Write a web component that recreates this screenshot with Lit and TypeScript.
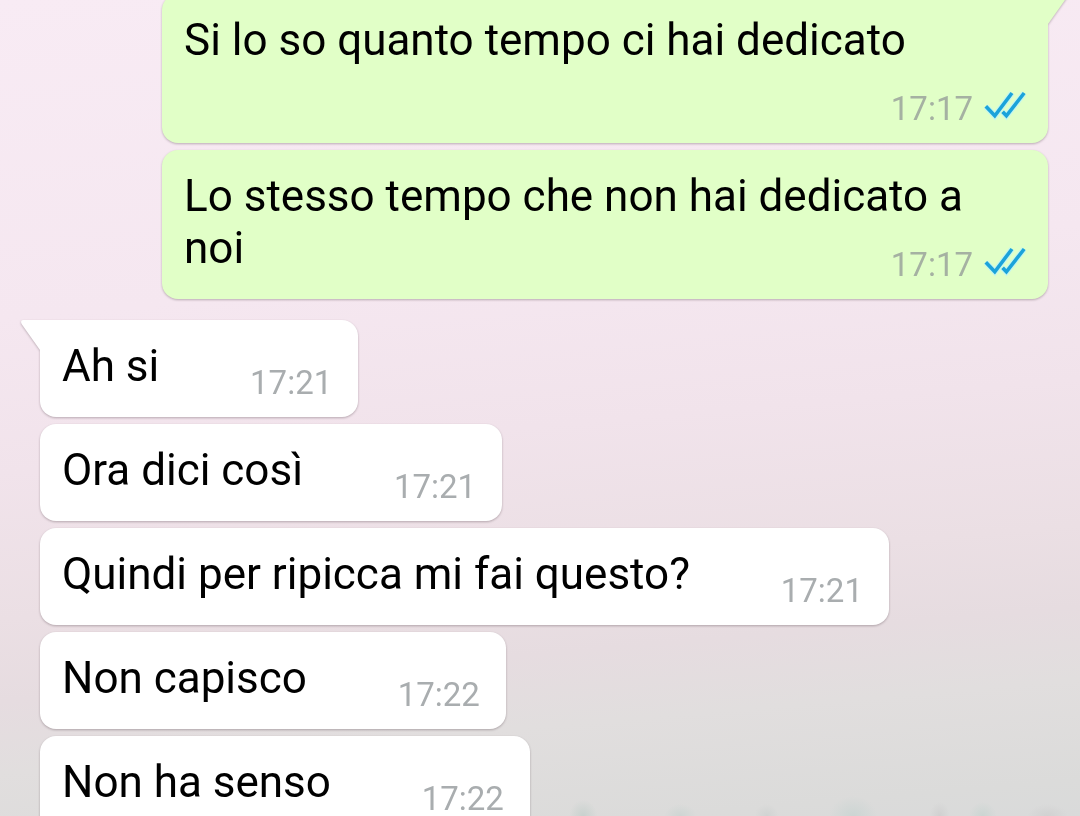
import { LitElement, html, css, svg } from "lit";
import { customElement, property } from "lit/decorators.js";

interface Message {
  text: string;
  time: string;
}

interface MessageGroup {
  mine: boolean;
  messages: Message[];
}

const GROUPS: MessageGroup[] = [
  {
    mine: true,
    messages: [
      { text: "Si lo so quanto tempo ci hai dedicato", time: "17:17" },
      { text: "Lo stesso tempo che non hai dedicato a noi", time: "17:17" },
    ],
  },
  {
    mine: false,
    messages: [
      { text: "Ah si", time: "17:21" },
      { text: "Ora dici così", time: "17:21" },
      { text: "Quindi per ripicca mi fai questo?", time: "17:21" },
      { text: "Non capisco", time: "17:22" },
      { text: "Non ha senso", time: "17:22" },
    ],
  },
];

const readTicks = html`
  <svg class="ticks" viewBox="0 0 42 36" role="img" aria-label="Letto">
    ${svg`
      <g fill="none" stroke-linecap="butt" stroke-linejoin="miter">
        <g stroke="#c4f6ee" stroke-width="6">
          <path d="M1.8 15.2 L10.8 24.8 L28 2" />
          <path d="M18.6 20.8 L22.4 24.8 L40.2 2" />
        </g>
        <g stroke="#1ba3da" stroke-width="3.6">
          <path d="M1.8 15.2 L10.8 24.8 L28 2" />
          <path d="M18.6 20.8 L22.4 24.8 L40.2 2" />
        </g>
      </g>
    `}
  </svg>
`;

@customElement("chat-bubble")
export class ChatBubble extends LitElement {
  @property() text = "";
  @property() time = "";
  @property({ type: Boolean, reflect: true }) mine = false;
  @property({ type: Boolean, reflect: true }) tail = false;

  static styles = css`
    :host {
      display: block;
      position: relative;
      box-sizing: border-box;
      padding: 20px 22px 15px;
      border-radius: 16px;
      background: #fff;
      color: #000;
      filter: drop-shadow(0 1px 1px rgba(60, 40, 50, 0.32));
    }
    :host([mine]) {
      background: #e1ffc7;
    }
    :host([tail]) {
      border-top-left-radius: 0;
    }
    :host([tail][mine]) {
      border-top-left-radius: 16px;
      border-top-right-radius: 0;
    }
    .content {
      display: grid;
    }
    .text,
    .meta {
      grid-area: 1 / 1;
    }
    .text {
      margin: 0;
      padding-bottom: 10px;
      font-size: 44px;
      line-height: 52px;
    }
    .reserve {
      display: inline-block;
      width: 177px;
      height: 1px;
    }
    .meta {
      place-self: end;
      display: flex;
      align-items: center;
      gap: 11px;
      padding-right: 4px;
      font-size: 33px;
      line-height: 39px;
      color: #a9adaf;
    }
    :host([mine]) .meta {
      padding-right: 0;
      color: #a5b1a2;
    }
    .ticks {
      width: 42px;
      height: 36px;
    }
    .tail {
      position: absolute;
      top: 0;
      right: 100%;
      width: 20px;
      height: 32px;
      margin-right: -1px;
      fill: #fff;
    }
    :host([mine]) .tail {
      right: auto;
      left: 100%;
      margin: 0 0 0 -1px;
      fill: #e1ffc7;
      transform: scaleX(-1);
    }
  `;

  render() {
    return html`
      ${this.tail
        ? html`<svg class="tail" viewBox="0 0 20 32" aria-hidden="true">
            <path d="M20 0 H2 Q-1 0 0.6 4 L19 30 V32 H20 Z" />
          </svg>`
        : null}
      <div class="content">
        <p class="text">${this.text}<span class="reserve"></span></p>
        <div class="meta">
          <time>${this.time}</time>${this.mine ? readTicks : null}
        </div>
      </div>
    `;
  }
}

@customElement("app-root")
export class AppRoot extends LitElement {
  static styles = css`
    :host {
      display: block;
      height: 100vh;
      overflow: hidden;
      font-family: Roboto, "Liberation Sans", sans-serif;
      background:
        radial-gradient(14px 16px at 54% 100%, #c8d1ce, transparent),
        radial-gradient(16px 12px at 63% 100%, #ced5d3, transparent),
        radial-gradient(12px 12px at 71% 100%, #d0d3d2, transparent),
        radial-gradient(24px 20px at 79% 100%, #ccd5d3, transparent),
        radial-gradient(10px 14px at 87% 100%, #d0d0d0, transparent),
        radial-gradient(14px 14px at 91% 100%, #cbd5d2, transparent),
        radial-gradient(20px 12px at 97% 100%, #d1d1d1, transparent),
        linear-gradient(
          175deg,
          #f8ebf4 0%,
          #f5e7f0 35%,
          #f1e3eb 52%,
          #ebdfe4 68%,
          #e6dce0 77%,
          #e1dede 85%,
          #dbdbda 96%,
          #d9dada 100%
        );
    }
    .thread {
      display: flex;
      flex-direction: column;
      gap: 21px;
      margin-top: -6px;
      padding: 0 32px 0 40px;
    }
    .group {
      display: flex;
      flex-direction: column;
      align-items: flex-start;
      gap: 7px;
      margin-right: 122px;
    }
    .group.mine {
      align-items: flex-end;
      margin: 0 0 0 122px;
    }
  `;

  render() {
    return html`
      <main class="thread">
        ${GROUPS.map(
          (group) => html`
            <section class="group ${group.mine ? "mine" : ""}">
              ${group.messages.map(
                (message, index) => html`
                  <chat-bubble
                    .text=${message.text}
                    .time=${message.time}
                    ?mine=${group.mine}
                    ?tail=${index === 0}
                  ></chat-bubble>
                `
              )}
            </section>
          `
        )}
      </main>
    `;
  }
}
